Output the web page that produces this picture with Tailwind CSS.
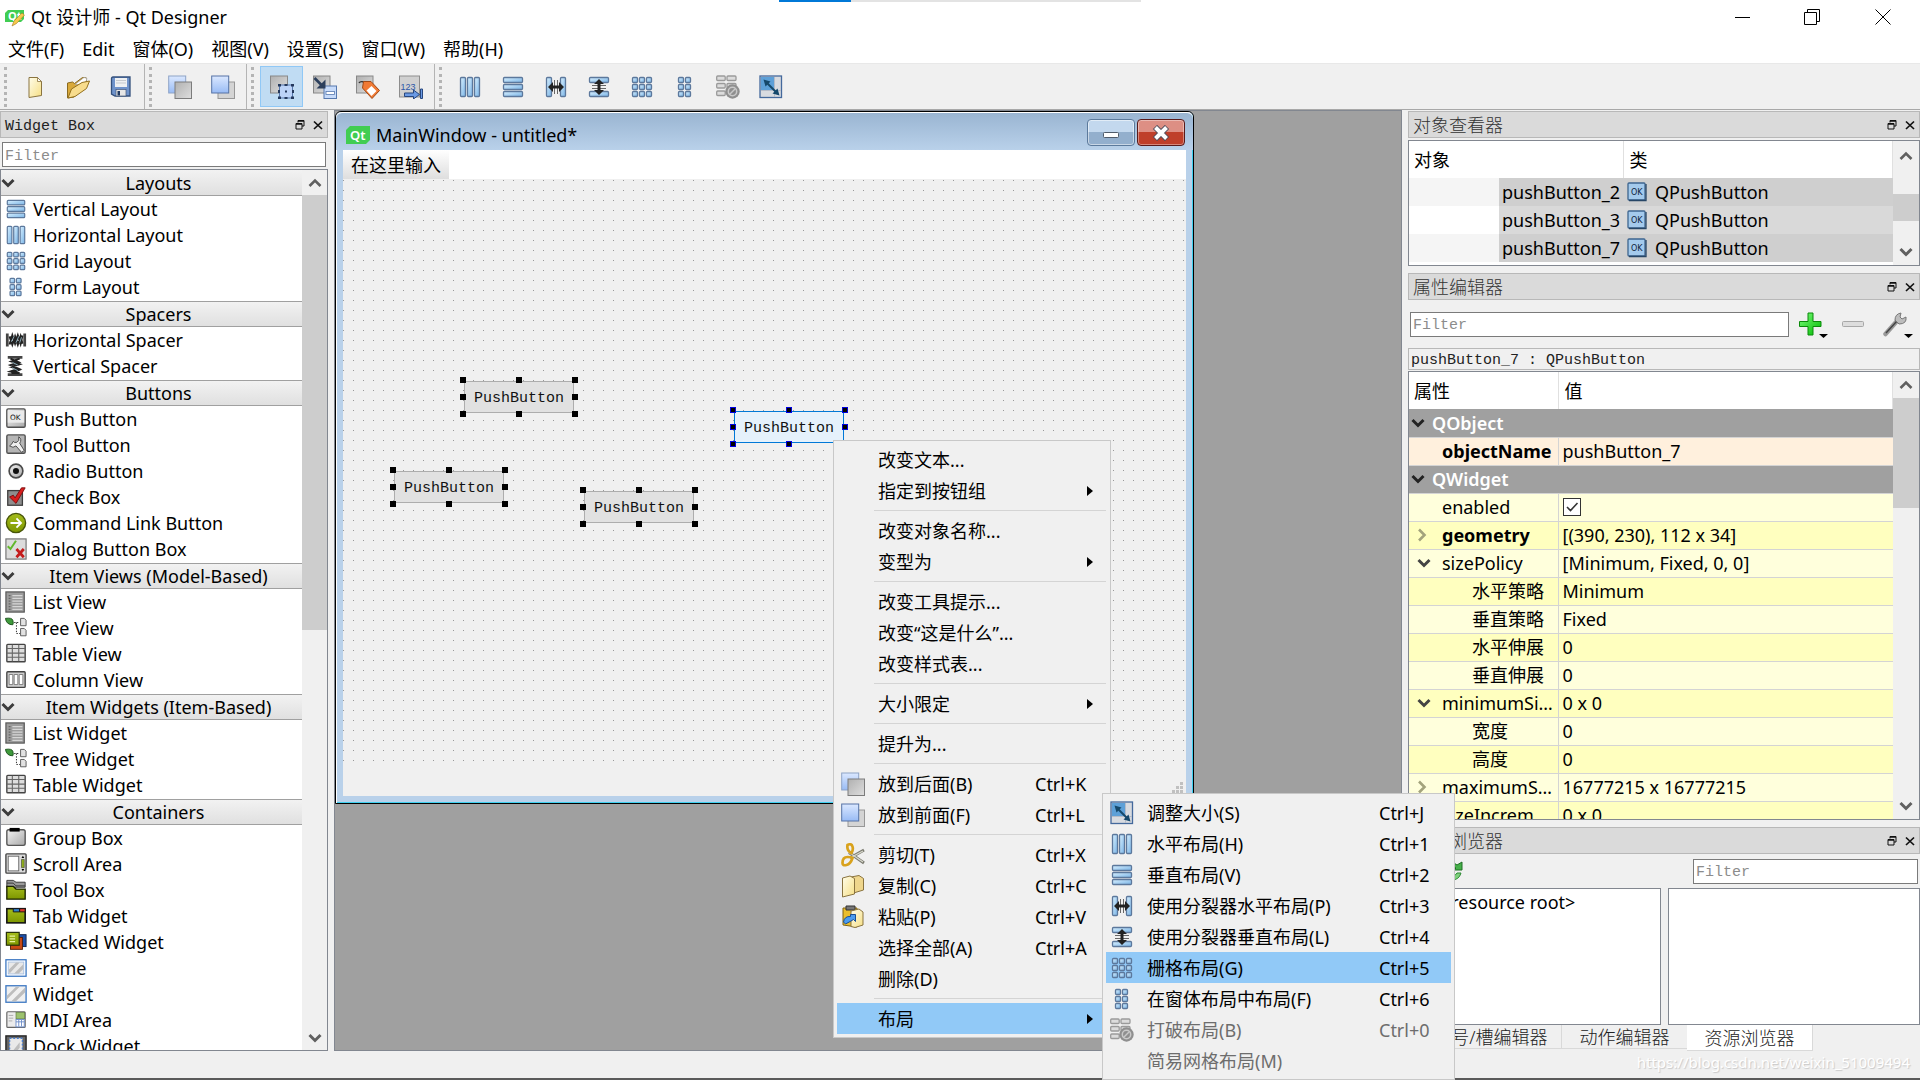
<!DOCTYPE html>
<html lang="zh-CN">
<head>
<meta charset="utf-8">
<title>Qt 设计师 - Qt Designer</title>
<script src="https://cdn.jsdelivr.net/npm/@tailwindcss/browser@4"></script>
</head>
<body class="h-screen overflow-hidden bg-[#f0f0f0] font-['Noto_Sans','Noto_Sans_CJK_SC',sans-serif] text-[18px] leading-6 text-black">

<svg class="absolute h-0 w-0" aria-hidden="true">
  <defs>
    <linearGradient id="gb" x1="0" y1="0" x2="1" y2="1"><stop offset="0" stop-color="#d8f0ff"/><stop offset="1" stop-color="#7ab4e6"/></linearGradient>
    <linearGradient id="gg" x1="0" y1="0" x2="1" y2="1"><stop offset="0" stop-color="#f4f4f4"/><stop offset="1" stop-color="#a9a9a9"/></linearGradient>
    <linearGradient id="gk" x1="0" y1="0" x2="1" y2="1"><stop offset="0" stop-color="#b0b0b0"/><stop offset="1" stop-color="#dedede"/></linearGradient>
    <linearGradient id="gs" x1="0" y1="0" x2="0" y2="1"><stop offset="0" stop-color="#dbe8ff"/><stop offset="1" stop-color="#98bbf5"/></linearGradient>
    <linearGradient id="gy" x1="0" y1="0" x2="1" y2="1"><stop offset="0" stop-color="#fffdea"/><stop offset="1" stop-color="#f6df85"/></linearGradient>
    <linearGradient id="gn" x1="0" y1="0" x2="0" y2="1"><stop offset="0" stop-color="#a5bd1c"/><stop offset="1" stop-color="#7d9600"/></linearGradient>
    <linearGradient id="gp" x1="0" y1="0" x2="1" y2="1"><stop offset="0" stop-color="#7dff7d"/><stop offset="1" stop-color="#00b800"/></linearGradient>
    <pattern id="dots" width="10" height="10" patternUnits="userSpaceOnUse"><rect x="0" y="1" width="1" height="1" fill="#989898"/></pattern>
  </defs>
  <symbol id="i-new" viewBox="0 0 24 24"><path d="M6 2.500h8.500l4 4V20.500l-12.500 2z" fill="url(#gy)" stroke="#8a7440"/><path d="M14.500 2.500v4h4z" fill="#fff" stroke="#8a7440" stroke-width=".8"/></symbol>
  <symbol id="i-open" viewBox="0 0 24 24"><path d="M1.500 8l5-1 2 1.500 8-6 4 .5v5L8 22l-6.500 1z" fill="#d9a93a" stroke="#8a6a20"/><path d="M9 9.500l9-7 3 1-2 6z" fill="#fff" stroke="#999" stroke-width=".6"/><path d="M2 23l3.500-9L16 7.500l7.500-1.500-3 7.500L9 21.500z" fill="#f8dc8c" stroke="#94701d"/></symbol>
  <symbol id="i-save" viewBox="0 0 24 24"><path d="M2.500 3.500q0-1.500 1.500-1.500h17v19H6l-3.500-2z" fill="#6f93cb" stroke="#34507c" stroke-width="1.300"/><rect x="6" y="3" width="12" height="9" fill="#eef0f2"/><path d="M7 5.500h10M7 8h10" stroke="#c5c9ce"/><rect x="7" y="14.500" width="10" height="6.500" fill="#e7e7e7" stroke="#45597a" stroke-width=".7"/><rect x="8.500" y="16" width="2.500" height="4.500" fill="#223a61"/></symbol>
  <symbol id="i-back" viewBox="0 0 24 24"><rect x=".7" y="1" width="17" height="17" fill="url(#gs)" stroke="#8ea3c6"/><rect x="7" y="7" width="16.500" height="16.500" fill="url(#gk)" stroke="#7c7c7c"/></symbol>
  <symbol id="i-front" viewBox="0 0 24 24"><rect x="7" y="7" width="16.500" height="16.500" fill="#d4d4d4" stroke="#979797"/><rect x=".7" y="1" width="17" height="17" fill="url(#gs)" stroke="#5673a6"/></symbol>
  <symbol id="i-edit" viewBox="0 0 24 24"><rect x="0.500" y="1" width="17" height="17" fill="url(#gk)" stroke="#888"/><rect x="9.500" y="10" width="13" height="13" fill="#bcd3f7" stroke="#5678ae"/><g fill="#25395c"><path d="M8 9h3v2.500H8zM14.500 9h3v2h-3zM21 9h3v2.500h-3zM8 15h2v3H8zM22 15h2v3h-2zM8 21.500h3v2.500H8zM14.500 22h3v2h-3zM21 21.500h3v2.500h-3zM15 15.500h2v2h-2z"/></g></symbol>
  <symbol id="i-sig" viewBox="0 0 24 24"><rect x="0.500" y="1" width="16.500" height="17" fill="url(#gk)" stroke="#888"/><rect x="11" y="11" width="12.500" height="12.500" fill="#c7dbfa" stroke="#5678ae"/><rect x="13" y="16.500" width="8.500" height="3" fill="#fff" stroke="#5678ae" stroke-width=".8"/><path d="M1.500 3l8 8" stroke="#2c3f5c" stroke-width="2.600"/><path d="M12.500 4.500v9H3.500z" fill="#2c3f5c"/></symbol>
  <symbol id="i-buddy" viewBox="0 0 24 24"><rect x="0.500" y="1" width="16.500" height="17" fill="url(#gk)" stroke="#888"/><path d="M3 8q1-2 5-1" stroke="#333" fill="none" stroke-width="1.400"/><path d="M7.500 6.500l7.500 0L23.500 15.500l-7.500 8L6.500 13z" fill="#f07a35" stroke="#a04a18"/><path d="M15.500 11L20.500 16l-5 5L10.500 15.500z" fill="#fff"/></symbol>
  <symbol id="i-tab" viewBox="0 0 24 24"><rect x=".5" y="1" width="20" height="21" fill="#d0d0d0" stroke="#8d8d8d"/><text x="1.500" y="15" font-size="9" font-family="Liberation Sans" fill="#2d57a8">123</text><path d="M5.500 18h9v-3l6 4.500-6 4.500v-2.500h-9zM21.500 14h2v9.500h-2z" fill="#6b9ae4" stroke="#27477f"/></symbol>
  <symbol id="i-hl" viewBox="0 0 24 24"><g fill="url(#gb)" stroke="#5c789c" stroke-width="1.300"><rect x="2.500" y="2.500" width="5" height="19" rx="1"/><rect x="9.500" y="2.500" width="5" height="19" rx="1"/><rect x="16.500" y="2.500" width="5" height="19" rx="1"/></g></symbol>
  <symbol id="i-vl" viewBox="0 0 24 24"><g fill="url(#gb)" stroke="#5c789c" stroke-width="1.300"><rect x="2.500" y="2.500" width="19" height="5" rx="1"/><rect x="2.500" y="9.500" width="19" height="5" rx="1"/><rect x="2.500" y="16.500" width="19" height="5" rx="1"/></g></symbol>
  <symbol id="i-hs" viewBox="0 0 24 24"><g fill="url(#gb)" stroke="#5c789c" stroke-width="1.300"><rect x="2.500" y="2.500" width="5" height="19" rx="1"/><rect x="16.500" y="2.500" width="5" height="19" rx="1"/></g><path d="M10.500 5v14M13.500 5v14" stroke="#666"/><path d="M4 12l5-5v3.500h6V7l5 5-5 5v-3.500H9V17z" fill="#222"/></symbol>
  <symbol id="i-vs" viewBox="0 0 24 24"><g fill="url(#gb)" stroke="#5c789c" stroke-width="1.300"><rect x="2.500" y="2.500" width="19" height="5" rx="1"/><rect x="2.500" y="16.500" width="19" height="5" rx="1"/></g><path d="M5 10.500h14M5 13.500h14" stroke="#666"/><path d="M12 4l5 5h-3.500v6H17l-5 5-5-5h3.500V9H7z" fill="#222"/></symbol>
  <symbol id="i-grid" viewBox="0 0 24 24"><g fill="url(#gb)" stroke="#5c789c" stroke-width="1.300"><rect x="2.500" y="2.500" width="5" height="5" rx="1"/><rect x="9.500" y="2.500" width="5" height="5" rx="1"/><rect x="16.500" y="2.500" width="5" height="5" rx="1"/><rect x="2.500" y="9.500" width="5" height="5" rx="1"/><rect x="9.500" y="9.500" width="5" height="5" rx="1"/><rect x="16.500" y="9.500" width="5" height="5" rx="1"/><rect x="2.500" y="16.500" width="5" height="5" rx="1"/><rect x="9.500" y="16.500" width="5" height="5" rx="1"/><rect x="16.500" y="16.500" width="5" height="5" rx="1"/></g></symbol>
  <symbol id="i-form" viewBox="0 0 24 24"><g fill="url(#gb)" stroke="#5c789c" stroke-width="1.300"><rect x="5.500" y="2.500" width="5" height="5" rx="1"/><rect x="12.500" y="2.500" width="5" height="5" rx="1"/><rect x="5.500" y="9.500" width="5" height="5" rx="1"/><rect x="12.500" y="9.500" width="5" height="5" rx="1"/><rect x="5.500" y="16.500" width="5" height="5" rx="1"/><rect x="12.500" y="16.500" width="5" height="5" rx="1"/></g></symbol>
  <symbol id="i-break" viewBox="0 0 24 24"><g fill="#dcdcdc" stroke="#9a9a9a" stroke-width="1.300"><rect x=".7" y="1" width="8.500" height="4.500" rx="1"/><rect x="11" y="1" width="9" height="4.500" rx="1"/><rect x=".7" y="8.500" width="8.500" height="4.500" rx="1"/><rect x="11" y="8.500" width="9" height="4.500" rx="1"/><rect x=".7" y="16" width="8.500" height="4.500" rx="1"/></g><circle cx="16.500" cy="16.500" r="7.200" fill="#8f8f8f"/><circle cx="16.500" cy="16.500" r="4.200" fill="none" stroke="#c9c9c9" stroke-width="1.500"/><path d="M13.500 19.500l6-6" stroke="#c9c9c9" stroke-width="1.500"/></symbol>
  <symbol id="i-size" viewBox="0 0 24 24"><rect x="1" y="1" width="21.500" height="21.500" fill="#d8dbe0" stroke="#44699c" stroke-width="1.300"/><rect x="2" y="2" width="13" height="13" fill="#5da0d8"/><path d="M15.500 2v20M2 15.500h20" stroke="#b5bcc8"/><path d="M7 7l11 11" stroke="#15486b" stroke-width="2"/><path d="M4.500 4.500l7 2-5 5zM20.500 20.500l-7-2 5-5z" fill="#15486b"/></symbol>
  <symbol id="i-hsp" viewBox="0 0 24 24"><path d="M2.500 5v14M21.500 5v14" stroke="#444" stroke-width="3"/><path d="M5 17L8 7l3 9 3-9 3 9 2-9M5 8l3 9 3-9 3 9 3-9 2 8" fill="none" stroke="#222" stroke-width="2.200"/><path d="M7 14l3-6M12 15l3-7M16 15l2-6" stroke="#8fb3c2"/></symbol>
  <symbol id="i-vsp" viewBox="0 0 24 24"><path d="M3 2.500h16M3 21.500h16" stroke="#444" stroke-width="3"/><path d="M16 4L7 7l9 3-9 3 9 3-9 4M6 4l9 4-9 3 9 4-9 3 10 2" fill="none" stroke="#222" stroke-width="2.200"/><path d="M8 8l6 3M8 14l6 3" stroke="#8fb3c2"/></symbol>
  <symbol id="i-push" viewBox="0 0 24 24"><rect x="2" y="1" width="20" height="20" rx="1.500" fill="url(#gg)" stroke="#4f4f4f" stroke-width="1.500"/><path d="M3 3h18v13H3z" fill="#eaeaea"/><text x="5.500" y="13" font-size="8" font-family="DejaVu Sans" fill="#111">OK</text></symbol>
  <symbol id="i-tool" viewBox="0 0 24 24"><rect x="2" y="1" width="20" height="20" rx="1.500" fill="#b5b5b5" stroke="#4f4f4f" stroke-width="1.500"/><path d="M5 13q4 3 7 0l6 7 3-2-5-8q3-4-1-7 1 5-2 6t-4-1q-1 3-4 5z" fill="#eee" stroke="#444"/></symbol>
  <symbol id="i-radio" viewBox="0 0 24 24"><circle cx="12" cy="12" r="7.500" fill="url(#gg)" stroke="#4a4a4a" stroke-width="1.800"/><circle cx="12" cy="12" r="3.300" fill="#111"/></symbol>
  <symbol id="i-check" viewBox="0 0 24 24"><rect x="3" y="5" width="16" height="16" fill="#8e8e8e" stroke="#3d3d3d" stroke-width="1.400"/><path d="M5 12l4-2 2 3 7-11 4 0-10 17z" fill="#d81e1e" stroke="#7c0d0d"/></symbol>
  <symbol id="i-cmd" viewBox="0 0 24 24"><circle cx="12" cy="12" r="10.500" fill="url(#gn)" stroke="#48560a" stroke-width="1.500"/><path d="M6 12h11M12.500 7l5 5-5 5" fill="none" stroke="#fff" stroke-width="2"/></symbol>
  <symbol id="i-dlg" viewBox="0 0 24 24"><rect x="1" y="1" width="22" height="22" fill="#dcdcdc" stroke="#777" stroke-width="1.300"/><path d="M3 9l3 3 6-9" fill="none" stroke="#62b82c" stroke-width="2.200"/><path d="M12.500 12l8 9M20.500 12l-8 9" stroke="#c41c1c" stroke-width="3"/></symbol>
  <symbol id="i-list" viewBox="0 0 24 24"><rect x="1" y="1" width="20" height="22" fill="#9c9c9c" stroke="#555" stroke-width="1.300"/><path d="M8 5h11M8 8h11M8 11h11M8 14h11M8 17h11M8 20h11" stroke="#d6d6d6" stroke-width="1.200"/><path d="M4 5h2M4 8h2M4 11h2M4 14h2M4 17h2M4 20h2" stroke="#666" stroke-width="1.200"/></symbol>
  <symbol id="i-tree" viewBox="0 0 24 24"><path d="M.5 1.500q7-1 8 2t0 5q-7 0-8-7z" fill="#3f9a3c" stroke="#174f18"/><path d="M10 6h6M12.500 6v12h4" fill="none" stroke="#222" stroke-dasharray="1.500 1.500"/><path d="M17 1.500h4l2 2v6h-6zM17 12.500h4l2 2v6h-6z" fill="#e2e2e2" stroke="#555"/></symbol>
  <symbol id="i-table" viewBox="0 0 24 24"><rect x="2" y="1.500" width="20" height="19" rx="1" fill="#dedede" stroke="#444" stroke-width="1.500"/><path d="M2 6h20M2 11h20M2 15.500h20M8 2v18M15 2v18" stroke="#666" stroke-width="1.200"/></symbol>
  <symbol id="i-col" viewBox="0 0 24 24"><rect x="2" y="3" width="20" height="17" rx="1" fill="#cfcfcf" stroke="#444" stroke-width="1.500"/><path d="M4.500 6h4v11h-4zM10 6h4v11h-4zM15.500 6h4v11h-4z" fill="#fff" stroke="#777"/></symbol>
  <symbol id="i-group" viewBox="0 0 24 24"><rect x="2" y="3" width="20" height="17" rx="2" fill="url(#gg)" stroke="#555" stroke-width="1.500"/><path d="M5 1h11v4H5z" fill="#000"/></symbol>
  <symbol id="i-scroll" viewBox="0 0 24 24"><rect x="1" y="1" width="22" height="21" rx="1" fill="#dcdcdc" stroke="#444" stroke-width="1.500"/><rect x="3.500" y="3.500" width="11.500" height="16" fill="#fff" stroke="#666"/><path d="M18 7h3v9h-3z" fill="#8fae1b" stroke="#333" stroke-width=".6"/><path d="M18 5.500l1.500-2.500 1.500 2.500zM18 17.500l1.500 2.500 1.500-2.500z"/></symbol>
  <symbol id="i-tbox" viewBox="0 0 24 24"><path d="M2 1.500h7l3 2h10V9H2z" fill="#9a9a9a" stroke="#333"/><path d="M2 4.500h7l3 3h10" fill="none" stroke="#333"/><path d="M2 8h7l3 3h10v11H2z" fill="url(#gn)" stroke="#1c2400" stroke-width="1.500"/></symbol>
  <symbol id="i-tabw" viewBox="0 0 24 24"><rect x="2" y="4" width="20" height="15.500" fill="url(#gn)" stroke="#111" stroke-width="1.700"/><path d="M9 4h7v3.500H9z" fill="#2f7fc8" stroke="#111"/><path d="M16 4h6v3.500h-6z" fill="#e03a2e" stroke="#111"/></symbol>
  <symbol id="i-stack" viewBox="0 0 24 24"><rect x="10" y="4" width="13" height="13" fill="#1d4fa8" stroke="#0d2248"/><rect x="6" y="7" width="13" height="13" fill="#c84a14" stroke="#571c05"/><rect x="1.500" y="1.500" width="14" height="14" fill="url(#gn)" stroke="#26300a" stroke-width="1.300"/><path d="M5 5.500h6M5 8.500h6M5 11.500h6" stroke="#e9f2a0" stroke-width="1.300"/></symbol>
  <symbol id="i-frame" viewBox="0 0 24 24"><rect x="1" y="3" width="22" height="18" fill="#fff" stroke="#3b77c2" stroke-width="1.400"/><rect x="3.500" y="5.500" width="17" height="13" fill="#e9e9e9" stroke="#9ab8df" stroke-width=".8"/><path d="M4 14L12 6h4L5 18zM10 18L20 8v5l-5 5z" fill="#bdbdbd"/></symbol>
  <symbol id="i-widget" viewBox="0 0 24 24"><rect x="1" y="3" width="22" height="18" fill="#f0f0f0" stroke="#3b77c2" stroke-width="1.400"/><path d="M2 14L12 4h4L2 18zM7 20L22 5v5L12 20z" fill="#bdbdbd"/></symbol>
  <symbol id="i-mdi" viewBox="0 0 24 24"><rect x="2" y="3" width="20" height="17" rx="1" fill="#ececec" stroke="#666" stroke-width="1.300"/><rect x="12" y="3.700" width="9.500" height="7" fill="#9cc26e" stroke="#5d7a3d" stroke-width=".7"/><path d="M4 7h5M4 10h5M4 13h4" stroke="#aaa"/><rect x="12" y="11.500" width="9" height="8" fill="#fff" stroke="#6c8dc9"/><path d="M12 14h9M15 12v7M18 12v7" stroke="#6c8dc9"/></symbol>
  <symbol id="i-dock" viewBox="0 0 24 24"><rect x="1" y="1" width="22" height="20" fill="#666" stroke="#222" stroke-width="1.500"/><rect x="5" y="3.500" width="14" height="18" fill="#e9e9e9" stroke="#4a7fd0" stroke-dasharray="2 2" stroke-width="1.500"/><path d="M8 18L16 8v6l-5 6z" fill="#bdbdbd"/></symbol>
  <symbol id="i-ok" viewBox="0 0 20 20"><rect x="1" y="1" width="17" height="17" rx="1" fill="#a4caec" stroke="#3e6690" stroke-width="1.300"/><path d="M2 18.500h17V2" fill="none" stroke="#274666" stroke-width="1.300"/><text x="4" y="12.500" font-size="8" font-family="DejaVu Sans" fill="#10253c">OK</text></symbol>
  <symbol id="i-cut" viewBox="0 0 24 24"><path d="M8 9.500L23 20M9 15L23 7" stroke="#7b7b70" stroke-width="3"/><path d="M8 9.500L22 19M9 15L22 8" stroke="#d7d7cb" stroke-width="1.400"/><path d="M6.500 2q4-2 5 1.500T10.500 10q-5-2-4-8z" fill="none" stroke="#d9a21c" stroke-width="2.700"/><path d="M1.500 20q0-6 5-6t5 1q-2 6-6 7t-4-2z" fill="none" stroke="#d9a21c" stroke-width="2.700"/></symbol>
  <symbol id="i-copy" viewBox="0 0 24 24"><path d="M10 3l8-1.500 4.500 3V16l-10 3z" fill="#efd68c" stroke="#8a7440"/><path d="M1.500 4L9 2l4.500 2.500V20l-12 3z" fill="url(#gy)" stroke="#8a7440"/></symbol>
  <symbol id="i-paste" viewBox="0 0 24 24"><path d="M2 3h14v19L2 20z" fill="#ebbe2c" stroke="#806213"/><path d="M5 1h9v4H5z" fill="#777" stroke="#333"/><path d="M10 6l8-2 4 3v13l-8 2.500-4-1z" fill="url(#gy)" stroke="#8a7440"/><path d="M2.500 17q1-6 7-5.500V9.500h5v7l-2-2q-5 3-8 4.500z" fill="#4b9cf0" stroke="#1b4f93"/></symbol>
  <symbol id="i-float" viewBox="0 0 10 10"><path d="M3 .5h6v5.500h-2M3 .5v2M1 3.500h6v5.500H1z" fill="none" stroke="#111"/><path d="M3 1h6M1 4h6" stroke="#111" stroke-width="1.500"/></symbol>
  <symbol id="i-x" viewBox="0 0 10 10"><path d="M1 1.500l8 7.500M9 1.500L1 9" stroke="#111" stroke-width="1.700"/></symbol>
  <symbol id="i-down" viewBox="0 0 14 10"><path d="M1.500 2L7 7.500 12.500 2" fill="none" stroke="currentColor" stroke-width="3"/></symbol>
  <symbol id="i-up" viewBox="0 0 14 10"><path d="M1.500 8L7 2.500 12.500 8" fill="none" stroke="currentColor" stroke-width="2.600"/></symbol>
  <symbol id="i-right" viewBox="0 0 10 14"><path d="M2 1.500L7.500 7 2 12.500" fill="none" stroke="currentColor" stroke-width="2.600"/></symbol>
</svg>

<div class="flex h-full flex-col">
  <!-- window title -->
  <header class="relative flex h-[34px] shrink-0 items-center bg-white pl-[5px]">
    <div class="absolute left-[779px] top-0 flex h-[2px] w-[362px] bg-[#e3e3e3]"><div class="w-[72px] bg-[#0078d7]"></div></div>
    <svg class="size-5" viewBox="0 0 20 20"><path d="M3 3h16v9l-3 3H0V6z" fill="#41cd52"/><text x="3" y="13" font-size="11" font-weight="700" font-family="Noto Sans" fill="#fff">Qt</text><path d="M7 19l2-5 8-8 2.500 2-8 8.500z" fill="#f6c94c" stroke="#a67a22" stroke-width=".6"/></svg>
    <h1 class="ml-[6px]">Qt 设计师 - Qt Designer</h1>
    <div class="ml-auto flex">
      <button aria-label="最小化" class="flex h-8 w-[69px] items-center justify-center"><svg class="size-4" viewBox="0 0 16 16"><path d="M0 8.500h15" stroke="#000"/></svg></button>
      <button aria-label="还原" class="flex h-8 w-[69px] items-center justify-center"><svg class="size-4" viewBox="0 0 16 16"><path d="M.5 3.500h12v12H.5zM3.500 3.500v-3h12v12h-3" fill="none" stroke="#000"/></svg></button>
      <button aria-label="关闭" class="flex h-8 w-[74px] items-center justify-center"><svg class="size-4" viewBox="0 0 16 16"><path d="M.5.5l15 15M15.500.5l-15 15" stroke="#000"/></svg></button>
    </div>
  </header>
  <nav id="menubar" class="flex h-[30px] shrink-0 items-center gap-[2px] border-b border-[#e8e8e8] bg-white"></nav>
  <div id="toolbar" class="flex h-[46px] shrink-0 border-b border-[#a8a8a8]"></div>

  <main class="flex min-h-0 flex-1">
    <!-- widget box -->
    <aside class="flex w-[328px] shrink-0 flex-col pt-px">
      <div class="flex h-[27px] shrink-0 items-center gap-2 border border-[#b8b8b8] bg-[#dadada] pl-1 pr-1 font-['Liberation_Mono',monospace] text-[15px] text-[#222]"><h2 class="mr-auto pt-1">Widget Box</h2><svg class="size-[10px]"><use href="#i-float"/></svg><svg class="size-[10px]"><use href="#i-x"/></svg></div>
      <input aria-label="Filter widgets" placeholder="Filter" class="mx-[2px] mb-[2px] mt-1 h-[25px] shrink-0 border border-[#7a7a7a] bg-white pl-[2px] pt-[3px] font-['Liberation_Mono',monospace] text-[15px] placeholder:text-[#8c8c8c]">
      <div class="flex min-h-0 flex-1 border border-[#828790] bg-white">
        <div id="widgets" class="flex-1 overflow-hidden"></div>
        <div class="flex w-[25px] flex-col items-center justify-between bg-[#f0f0f0] text-[#606060]">
          <div class="flex h-[25px] shrink-0 items-center"><svg class="h-[10px] w-[14px]"><use href="#i-up"/></svg></div>
          <div class="mb-auto h-[435px] w-full bg-[#cdcdcd]"></div>
          <div class="flex h-[25px] shrink-0 items-center"><svg class="h-[10px] w-[14px]"><use href="#i-down"/></svg></div>
        </div>
      </div>
    </aside>

    <!-- form area -->
    <section class="relative ml-[6px] min-w-0 flex-1 overflow-hidden border border-[#828790] bg-[#a0a0a0]">
      <div class="absolute left-0 top-0 flex h-[693px] w-[859px] flex-col rounded-t-md border border-black bg-[#b9d1ea] shadow-[inset_1px_1px_#fff,inset_-1px_-1px_#3fd0f0]">
        <div class="flex h-[38px] shrink-0 items-end rounded-t-md bg-linear-to-b from-[#99b4d1] to-[#b9d1ea] pl-[10px] pr-2 shadow-[inset_0_1px_#fff]">
          <svg class="mb-[6px] h-[18px] w-6" viewBox="0 0 24 18"><path d="M4 0h20v14l-4 4H0V4z" fill="#41cd52"/><text x="4" y="14" font-size="13" font-weight="600" font-family="Noto Sans" fill="#fff">Qt</text></svg>
          <h2 class="mb-[3px] ml-[6px] mr-auto">MainWindow - untitled*</h2>
          <button aria-label="最小化窗体" class="mb-1 flex h-[27px] w-12 items-center justify-center rounded-sm border border-[#5c7a9c] bg-linear-to-b from-[#c3d8ee] from-50% to-[#93afcd] to-50% pt-1 shadow-[inset_0_0_0_1px_#ffffff80]"><svg class="h-[6px] w-4" viewBox="0 0 16 6"><rect x=".5" y=".5" width="15" height="5" rx="1" fill="#fff" stroke="#4f5b6a"/></svg></button>
          <button aria-label="关闭窗体" class="mb-1 ml-[2px] flex h-[27px] w-12 items-center justify-center rounded-sm border border-[#5a1a1a] bg-linear-to-b from-[#dd8f84] from-50% to-[#bf3f2a] to-50% shadow-[inset_0_0_0_1px_#ffffff60]"><svg class="h-4 w-5" viewBox="0 0 20 16"><path d="M4 2l12 12M16 2L4 14" stroke="#504f5c" stroke-width="6"/><path d="M4.500 2.500l11 11M15.500 2.500l-11 11" stroke="#fff" stroke-width="4"/></svg></button>
        </div>
        <div class="mx-[7px] flex h-[29px] shrink-0 bg-white"><span class="bg-linear-to-b from-white to-[#dedede] px-2 leading-[30px]">在这里输入</span></div>
        <div class="relative mx-[7px] mb-[7px] flex flex-1 flex-col bg-[#f0f0f0]">
          <svg class="h-[590px] w-full"><rect width="100%" height="100%" fill="url(#dots)"/></svg>
          <svg class="absolute bottom-[3px] right-[3px] size-[11px]" viewBox="0 0 11 11"><path d="M8 0h3v3H8zM8 4h3v3H8zM8 8h3v3H8zM4 4h3v3H4zM4 8h3v3H4zM0 8h3v3H0z" fill="#c0c0c0"/></svg>
          <div id="canvas"></div>
        </div>
      </div>
    </section>

    <!-- right docks -->
    <aside class="ml-[6px] flex w-[512px] shrink-0 flex-col pt-px">
      <div class="flex h-[27px] shrink-0 items-center gap-2 border border-[#b8b8b8] bg-[#dadada] pl-1 pr-1 text-[#333]"><h2 class="mr-auto font-light">对象查看器</h2><svg class="size-[10px]"><use href="#i-float"/></svg><svg class="size-[10px]"><use href="#i-x"/></svg></div>
      <div class="mt-[2px] flex h-[126px] shrink-0 border border-[#828790] bg-white">
        <table class="h-fit flex-1 table-fixed">
          <colgroup><col class="w-[90px]"><col class="w-[124px]"><col></colgroup>
          <thead><tr class="h-[37px] text-left"><th colspan="2" class="border-r border-[#e0e0e0] pl-[5px] font-normal">对象</th><th class="border-r border-[#e0e0e0] pl-[6px] font-normal">类</th></tr></thead>
          <tbody id="objects"></tbody>
        </table>
        <div class="flex w-[26px] flex-col items-center bg-[#f0f0f0] text-[#606060]">
          <div class="flex h-[30px] items-center"><svg class="h-[10px] w-[14px]"><use href="#i-up"/></svg></div>
          <div class="mt-[23px] h-[27px] w-full bg-[#cdcdcd]"></div>
          <div class="mt-auto flex h-[26px] items-center"><svg class="h-[10px] w-[14px]"><use href="#i-down"/></svg></div>
        </div>
      </div>

      <div class="mt-[7px] flex h-[27px] shrink-0 items-center gap-2 border border-[#b8b8b8] bg-[#dadada] pl-1 pr-1 text-[#333]"><h2 class="mr-auto font-light">属性编辑器</h2><svg class="size-[10px]"><use href="#i-float"/></svg><svg class="size-[10px]"><use href="#i-x"/></svg></div>
      <div class="flex h-12 shrink-0 items-center gap-[10px] pl-[2px] pr-[5px]">
        <input aria-label="Filter properties" placeholder="Filter" class="h-[25px] min-w-0 flex-1 border border-[#7a7a7a] bg-white pl-[2px] pt-[3px] font-['Liberation_Mono',monospace] text-[15px] placeholder:text-[#8c8c8c]">
        <button aria-label="添加属性" class="h-7 w-8"><svg class="h-7 w-8" viewBox="0 0 32 28"><path d="M9 3h5v8.500h8v5h-8V25H9v-8.500H.5v-5H9z" fill="url(#gp)" stroke="#0a8a0a"/><path d="M20 24h9l-4.500 4z"/></svg></button>
        <button aria-label="删除属性" class="h-7 w-8"><svg class="h-7 w-8" viewBox="0 0 32 28"><rect x="1.500" y="11.500" width="21" height="5" rx="1" fill="#ddd" stroke="#a8a8a8"/></svg></button>
        <button aria-label="配置" class="h-7 w-8"><svg class="h-7 w-8" viewBox="0 0 32 28"><path d="M2.500 24L14 11" stroke="#999" stroke-width="4.500" stroke-linecap="round"/><path d="M3 23L14 11" stroke="#444" stroke-width="1.500"/><path d="M12 10q0-6 6-7l-1 4 2 2 4-2q1 7-7 7z" fill="#bdbdbd" stroke="#777"/><path d="M21 24h9l-4.500 4z"/></svg></button>
      </div>
      <div class="h-[22px] shrink-0 border border-[#b8b8b8] pl-[2px] font-['Liberation_Mono',monospace] text-[15px] leading-6 text-[#222]">pushButton_7 : QPushButton</div>
      <div class="mt-px flex min-h-0 flex-1 overflow-hidden border border-[#828790] bg-white">
        <div class="h-full flex-1 overflow-hidden">
          <table class="w-full table-fixed">
            <colgroup><col class="w-[149px]"><col></colgroup>
            <thead><tr class="h-[37px] text-left"><th class="border-r border-[#e0e0e0] pl-[5px] font-normal">属性</th><th class="border-r border-[#e0e0e0] pl-[6px] font-normal">值</th></tr></thead>
            <tbody id="props"></tbody>
          </table>
        </div>
        <div class="flex w-[26px] flex-col items-center bg-[#f0f0f0] text-[#606060]">
          <div class="flex h-[26px] shrink-0 items-center"><svg class="h-[10px] w-[14px]"><use href="#i-up"/></svg></div>
          <div class="h-[110px] w-full bg-[#cdcdcd]"></div>
          <div class="mt-auto flex h-[26px] items-center"><svg class="h-[10px] w-[14px]"><use href="#i-down"/></svg></div>
        </div>
      </div>

      <div class="mt-[7px] flex h-[27px] shrink-0 items-center gap-2 border border-[#b8b8b8] bg-[#dadada] pl-1 pr-1 text-[#333]"><h2 class="mr-auto font-light">资源浏览器</h2><svg class="size-[10px]"><use href="#i-float"/></svg><svg class="size-[10px]"><use href="#i-x"/></svg></div>
      <div class="flex h-[34px] shrink-0 items-center pl-[33px] pr-[2px]">
        <svg class="size-[22px]" viewBox="0 0 22 22"><path d="M2 10q1-7 9-7 3 0 5 2l5-3v8h-8l2-2q-5-4-9 2z" fill="#46b04a" stroke="#1f6e25"/><path d="M20 13q-2 7-9 7-3 0-5-2l-4 3v-8h8l-2 2q4 4 8-2z" fill="#7fd07d" stroke="#2d8a33"/></svg>
        <input aria-label="Filter resources" placeholder="Filter" class="ml-auto h-[25px] w-[225px] border border-[#7a7a7a] bg-white pl-[2px] pt-[3px] font-['Liberation_Mono',monospace] text-[15px] placeholder:text-[#8c8c8c]">
      </div>
      <div class="flex h-[137px] shrink-0 gap-[7px]">
        <div class="w-[253px] border border-[#828790] bg-white pl-8 pt-px">&lt;resource root&gt;</div>
        <div class="flex-1 border border-[#828790] bg-white"></div>
      </div>
      <div class="flex h-[26px] shrink-0 items-start text-[#222]" role="tablist">
        <button role="tab" class="h-6 w-[154px] border-b border-r border-[#d9d9d9] pl-3 leading-[22px] font-light">信号/槽编辑器</button>
        <button role="tab" class="h-6 w-[125px] border-b border-[#d9d9d9] leading-[22px] font-light">动作编辑器</button>
        <button role="tab" aria-selected="true" class="h-[26px] w-[126px] border-b border-r border-[#d9d9d9] bg-white leading-[24px] font-light">资源浏览器</button>
      </div>
    </aside>
  </main>

  <footer class="flex h-[29px] shrink-0 items-start justify-end border-b-2 border-[#5a5a5a] pr-[10px] text-[15px] leading-[22px] text-white [text-shadow:1px_1px_1px_#c8c8c8]">https://blog.csdn.net/weixin_51009494</footer>
</div>

<div id="ctx" role="menu" class="absolute left-[833px] top-[440px] w-[278px] border border-[#c8c8c8] bg-[#f0f0f0] p-[3px]"></div>
<div id="sub" role="menu" class="absolute left-[1102px] top-[793px] w-[353px] border border-[#c8c8c8] bg-[#f0f0f0] p-[3px]"></div>

<script>
const $ = id => document.getElementById(id);
const icon = (n, c) => `<svg class="${c}" aria-hidden="true"><use href="#i-${n}"/></svg>`;

$('menubar').innerHTML = ['文件(F)', 'Edit', '窗体(O)', '视图(V)', '设置(S)', '窗口(W)', '帮助(H)']
  .map(t => `<button class="px-2 leading-7">${t}</button>`).join('');

const tools = [[['new','新建'],['open','打开'],['save','保存']], [['back','放到后面'],['front','放到前面']],
  [['edit','编辑控件'],['sig','编辑信号/槽'],['buddy','编辑伙伴'],['tab','编辑 Tab 顺序']],
  [['hl','水平布局'],['vl','垂直布局'],['hs','使用分裂器水平布局'],['vs','使用分裂器垂直布局'],['grid','栅格布局'],['form','在窗体布局中布局'],['break','打破布局'],['size','调整大小']]];
$('toolbar').innerHTML = tools.map((g, i) => `<div class="flex items-center pl-1 pr-[2px] ${i < 3 ? 'border-r border-[#b4b4b4]' : ''}">
  <div class="mr-[6px] h-10 border-l-3 border-dotted border-[#b4b4b4]"></div>${g.map(([n, l]) =>
  `<button aria-label="${l}" class="flex h-[41px] w-[43px] items-center justify-center ${n === 'edit' ? 'border border-[#90c8f6] bg-[#c0dcf3]' : ''}">${icon(n, 'size-6')}</button>`).join('')}</div>`).join('');

const widgets = {
  'Layouts': [['vl','Vertical Layout'],['hl','Horizontal Layout'],['grid','Grid Layout'],['form','Form Layout']],
  'Spacers': [['hsp','Horizontal Spacer'],['vsp','Vertical Spacer']],
  'Buttons': [['push','Push Button'],['tool','Tool Button'],['radio','Radio Button'],['check','Check Box'],['cmd','Command Link Button'],['dlg','Dialog Button Box']],
  'Item Views (Model-Based)': [['list','List View'],['tree','Tree View'],['table','Table View'],['col','Column View']],
  'Item Widgets (Item-Based)': [['list','List Widget'],['tree','Tree Widget'],['table','Table Widget']],
  'Containers': [['group','Group Box'],['scroll','Scroll Area'],['tbox','Tool Box'],['tabw','Tab Widget'],['stack','Stacked Widget'],['frame','Frame'],['widget','Widget'],['mdi','MDI Area'],['dock','Dock Widget']]
};
$('widgets').innerHTML = Object.entries(widgets).map(([h, items], i) =>
  `<button class="flex h-[26px] w-full items-center border-b border-[#a0a0a0] bg-linear-to-b from-[#f2f2f2] to-[#e0e0e0] ${i ? 'border-t' : ''}">${icon('down', 'h-[10px] w-[14px] text-[#3c3c3c]')}<span class="flex-1">${h}</span></button>
  <ul class="mb-px">${items.map(([n, t]) => `<li class="flex h-[26px] items-center gap-[6px] pl-1">${icon(n, 'size-[22px]')}${t}</li>`).join('')}</ul>`).join('');

const handles = ['left-0 top-0', 'left-[56px] top-0', 'right-0 top-0', 'left-0 top-[17px]', 'right-0 top-[17px]', 'bottom-0 left-0', 'bottom-0 left-[56px]', 'bottom-0 right-0'];
$('canvas').innerHTML = ['left-[117px] top-[198px]', 'left-[47px] top-[288px]', 'left-[237px] top-[308px]', 'left-[387px] top-[228px]'].map((p, i) =>
  `<div class="absolute h-10 w-[118px] p-1 ${p}"><button class="h-8 w-[110px] border pt-1 font-['Liberation_Mono',monospace] text-[15px] text-[#111] ${i === 3 ? 'border-[#0078d7] bg-[#e5f1fb]' : 'border-[#adadad] bg-[#e1e1e1]'}">PushButton</button>${handles.map(h =>
  `<i class="absolute size-[6px] bg-black ${h} ${i === 3 ? 'border border-[#0000e0]' : ''}"></i>`).join('')}</div>`).join('');

$('objects').innerHTML = ['pushButton_2', 'pushButton_3', 'pushButton_7'].map((t, i) =>
  `<tr class="h-7 ${i % 2 ? 'bg-[#d9d9d9]' : 'bg-[#cfcfcf]'}"><td class="${i % 2 ? 'bg-white' : 'bg-[#f5f5f5]'}"></td><td class="pl-[3px]">${t}</td><td class="pl-1"><div class="flex items-center gap-2">${icon('ok', 'size-5')}QPushButton</div></td></tr>`).join('');

const props = [['objectName','pushButton_7','','b'], 'QWidget', ['enabled','check','',''], ['geometry','[(390, 230), 112 x 34]','right','b'],
  ['sizePolicy','[Minimum, Fixed, 0, 0]','down',''], ['水平策略','Minimum','sub',''], ['垂直策略','Fixed','sub',''], ['水平伸展','0','sub',''], ['垂直伸展','0','sub',''],
  ['minimumSize','0 x 0','down',''], ['宽度','0','sub',''], ['高度','0','sub',''], ['maximumSize','16777215 x 16777215','right',''], ['sizeIncrement','0 x 0','right','']];
$('props').innerHTML = ['QObject', ...props].map((r, i) => {
  if (typeof r === 'string') return `<tr class="h-7 border-b border-[#d4d4d4] bg-[#a0a0a0]"><th colspan="2" class="pl-[2px] text-left font-semibold text-white"><div class="flex items-center gap-[7px]">${icon('down', 'h-[10px] w-[14px] text-[#222]')}${r}</div></th></tr>`;
  const [n, v, k, b] = r;
  const bg = i === 1 ? 'bg-[#fff0dd]' : i % 2 ? 'bg-[#ffffdc]' : 'bg-[#ffffbf]';
  const mark = k === 'down' ? icon('down', 'h-[10px] w-[14px] text-[#444]') : k === 'right' ? icon('right', 'h-[14px] w-[10px] text-[#a3a37c]') : '';
  const val = v === 'check' ? '<input type="checkbox" checked aria-label="enabled" class="absolute size-[18px] appearance-none border border-[#333] bg-white"><svg class="pointer-events-none relative size-[18px]" viewBox="0 0 18 18"><path d="M4 9l3.500 3.500L14.500 5" fill="none" stroke="#333" stroke-width="1.600"/></svg>' : v;
  return `<tr class="h-7 border-b border-[#d4d4d4] ${bg}"><td class="border-r border-[#d4d4d4] ${b ? 'font-bold' : ''}"><div class="flex items-center ${k === 'sub' ? 'pl-[63px]' : 'pr-1'}">${k === 'sub' ? '' : `<span class="flex w-[33px] shrink-0 pl-2">${mark}</span>`}<span class="truncate">${n}</span></div></td><td class="pl-1 leading-[26px]">${val}</td></tr>`;
}).join('');

const item = ([n, t, k, s]) => `<button role="menuitem" class="flex h-[31px] w-full items-center pl-1 text-left ${s === 'on' ? 'bg-[#91c9f7]' : ''} ${s === 'off' ? 'text-[#6d6d6d]' : ''}"><span class="mr-[13px] w-6 shrink-0">${n ? icon(n, 'size-6') : ''}</span><span class="flex-1">${t}</span>${
  k === '>' ? '<svg class="mr-[14px] h-[10px] w-[6px]" viewBox="0 0 6 10"><path d="M0 0l6 5-6 5z"/></svg>' : `<span class="w-[72px]">${k}</span>`}</button>`;
const sep = '<div class="ml-[37px] flex h-[9px] items-center pr-px"><div class="h-px flex-1 bg-[#d4d4d4]"></div></div>';
$('ctx').innerHTML = [['','改变文本...',''],['','指定到按钮组','>'],0,['','改变对象名称...',''],['','变型为','>'],0,['','改变工具提示...',''],['','改变“这是什么”...',''],['','改变样式表...',''],0,
  ['','大小限定','>'],0,['','提升为...',''],0,['back','放到后面(B)','Ctrl+K'],['front','放到前面(F)','Ctrl+L'],0,['cut','剪切(T)','Ctrl+X'],['copy','复制(C)','Ctrl+C'],['paste','粘贴(P)','Ctrl+V'],
  ['','选择全部(A)','Ctrl+A'],['','删除(D)',''],0,['','布局','>','on']].map(r => r ? item(r) : sep).join('');
$('sub').innerHTML = [['size','调整大小(S)','Ctrl+J'],['hl','水平布局(H)','Ctrl+1'],['vl','垂直布局(V)','Ctrl+2'],['hs','使用分裂器水平布局(P)','Ctrl+3'],['vs','使用分裂器垂直布局(L)','Ctrl+4'],
  ['grid','栅格布局(G)','Ctrl+5','on'],['form','在窗体布局中布局(F)','Ctrl+6'],['break','打破布局(B)','Ctrl+0','off'],['','简易网格布局(M)','','off']].map(item).join('');
</script>
</body>
</html>
